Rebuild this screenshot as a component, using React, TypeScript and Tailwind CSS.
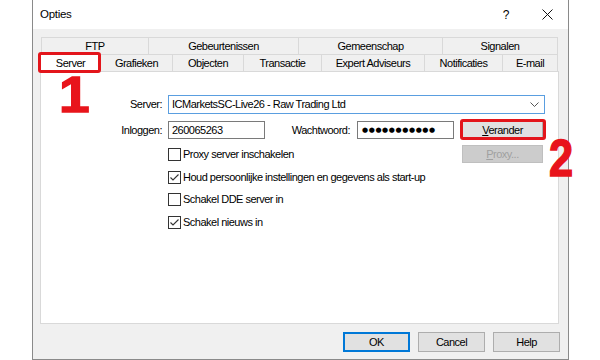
import React from "react";

function Tab({ label, w, selected, last }: { label: string; w: number; selected?: boolean; last?: boolean }) {
  return (
    <div
      style={{ width: w }}
      className={
        "h-[17px] flex items-center justify-center border-t border-l border-[#d9d9d9] " +
        (last ? "border-r " : "") +
        (selected ? "bg-white relative z-10 h-[18px] -mb-[1px]" : "bg-[#f0f0f0]")
      }
    >
      <span className="leading-none">{label}</span>
    </div>
  );
}

function Check({ checked, label }: { checked?: boolean; label: string }) {
  return (
    <div className="flex items-center h-[18px]">
      <div className="w-[13px] h-[13px] border border-[#333] bg-white flex items-center justify-center">
        {checked && (
          <svg width="11" height="11" viewBox="0 0 11 11">
            <polyline points="1.5,5.5 4,8 9.5,2.5" fill="none" stroke="#333" strokeWidth="1.1" />
          </svg>
        )}
      </div>
      <span className="ml-[2px] whitespace-nowrap">{label}</span>
    </div>
  );
}

export default function App() {
  return (
    <div
      className="relative w-[600px] h-[360px] bg-white overflow-hidden text-[11px] tracking-[-0.5px] text-black"
      style={{ fontFamily: '"Liberation Sans", Arial, sans-serif' }}
    >
      <div className="ml-[32px] w-[537px] h-[360px] border-x border-b border-[#8a8a8a] flex flex-col bg-[#f0f0f0]">
        {/* title bar */}
        <div className="h-[29px] bg-white flex items-center pl-[7px] shrink-0">
          <span className="text-[11.5px] tracking-[-0.3px]">Opties</span>
          <span className="ml-auto text-[12px] mr-[33px]">?</span>
          <svg width="11" height="11" viewBox="0 0 11 11" className="mr-[15px]">
            <path d="M0.5 0.5 L10.5 10.5 M10.5 0.5 L0.5 10.5" stroke="#111" strokeWidth="1" />
          </svg>
        </div>
        {/* body */}
        <div className="flex-1 pl-[7px] pr-[8px] pt-[8px] flex flex-col">
          <div className="flex ml-[1px]">
            <Tab label="FTP" w={107} />
            <Tab label="Gebeurtenissen" w={150} />
            <Tab label="Gemeenschap" w={144} />
            <Tab label="Signalen" w={116} last />
          </div>
          <div className="flex">
            <Tab label="Server" w={60} selected />
            <Tab label="Grafieken" w={72} />
            <Tab label="Objecten" w={71} />
            <Tab label="Transactie" w={78} />
            <Tab label="Expert Adviseurs" w={103} />
            <Tab label="Notificaties" w={78} />
            <Tab label="E-mail" w={56} last />
          </div>
          <div className="h-[253px] w-[519px] bg-white border border-[#d9d9d9] pt-[23px]">
            {/* Server row */}
            <div className="flex items-center h-[19px]">
              <span className="w-[121px] text-right">Server:</span>
              <div className="ml-[6px] w-[377px] h-[19px] border border-[#5a9ee0] flex items-center pl-[3px] pr-[5px]">
                <span className="whitespace-nowrap">ICMarketsSC-Live26 - Raw Trading Ltd</span>
                <svg width="9" height="5" viewBox="0 0 9 5" className="ml-auto">
                  <polyline points="0.5,0.5 4.5,4.5 8.5,0.5" fill="none" stroke="#555" strokeWidth="1" />
                </svg>
              </div>
            </div>
            {/* login row */}
            <div className="flex items-center h-[18px] mt-[7px]">
              <span className="w-[121px] text-right">Inloggen:</span>
              <div className="ml-[6px] w-[97px] h-[18px] border border-[#7a7a7a] flex items-center pl-[3px]">
                260065263
              </div>
              <span className="w-[85px] text-right">Wachtwoord:</span>
              <div className="ml-[7px] w-[97px] h-[18px] border border-[#7a7a7a] flex items-center pl-[4px]">
                <span className="text-[7px] tracking-[0.6px] leading-none" style={{ fontFamily: '"DejaVu Sans", sans-serif' }}>
                  ●●●●●●●●●●●
                </span>
              </div>
              <div className="ml-[8px] w-[81px] h-[18px] border border-[#adadad] bg-[#e1e1e1] flex items-center justify-center">
                <span>
                  <span className="underline">V</span>erander
                </span>
              </div>
            </div>
            {/* proxy row */}
            <div className="flex items-center ml-[127px] w-[375px] mt-[6px]">
              <Check label="Proxy server inschakelen" />
              <div className="ml-auto w-[81px] h-[18px] border border-[#bfbfbf] bg-[#cccccc] text-[#a0a0a0] flex items-center justify-center">
                <span>
                  <span className="underline">P</span>roxy...
                </span>
              </div>
            </div>
            <div className="ml-[127px] mt-[5px]">
              <Check checked label="Houd persoonlijke instellingen en gegevens als start-up" />
            </div>
            <div className="ml-[127px] mt-[4px]">
              <Check label="Schakel DDE server in" />
            </div>
            <div className="ml-[127px] mt-[5px]">
              <Check checked label="Schakel nieuws in" />
            </div>
          </div>
          {/* buttons */}
          <div className="flex justify-end gap-[8px] mt-[8px]">
            <div className="w-[67px] h-[20px] border-2 border-[#0078d7] bg-[#e1e1e1] flex items-center justify-center">OK</div>
            <div className="w-[67px] h-[20px] border border-[#adadad] bg-[#e1e1e1] flex items-center justify-center">Cancel</div>
            <div className="w-[67px] h-[20px] border border-[#adadad] bg-[#e1e1e1] flex items-center justify-center">Help</div>
          </div>
        </div>
      </div>

      {/* annotations */}
      <div className="absolute left-[38px] top-[52px] w-[63px] h-[21px] border-[3px] border-[#e3151b] rounded-[3px] z-20" />
      <div className="absolute left-[460px] top-[119px] w-[86px] h-[21px] border-[3px] border-[#e3151b] rounded-[3px] z-20" />
      <div className="absolute left-[59px] top-[77px] h-[36px] text-[50px] leading-[36px] font-bold text-[#e8141b] tracking-normal origin-left scale-x-[1.1] [-webkit-text-stroke:1.5px_#e8141b]">
        1
      </div>
      <div className="absolute left-[549px] top-[140px] h-[37px] text-[51px] leading-[37px] font-bold text-[#e8141b] tracking-normal origin-left scale-x-[0.85] [-webkit-text-stroke:1.5px_#e8141b]">
        2
      </div>
    </div>
  );
}
